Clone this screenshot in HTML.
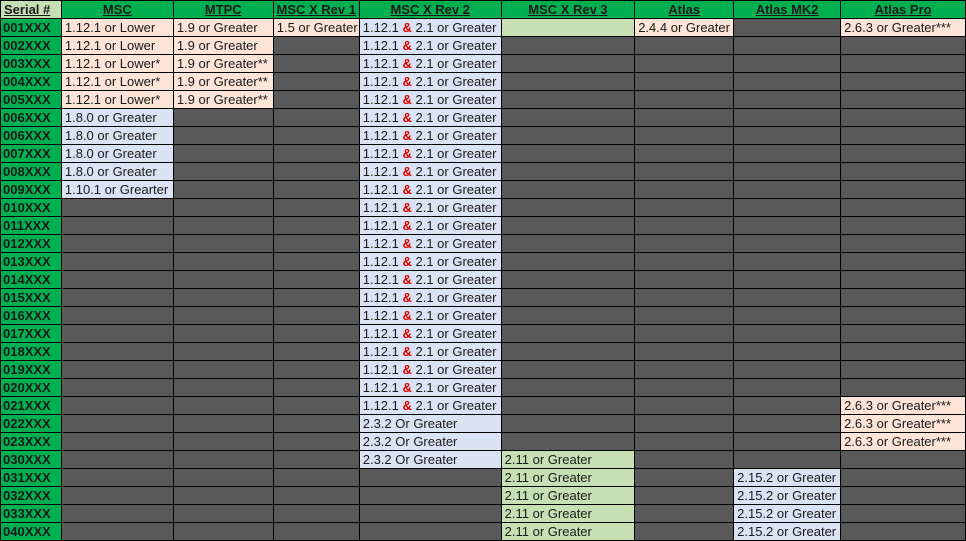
<!DOCTYPE html><html><head><style>
body{margin:0;width:966px;height:540px;overflow:hidden;background:#595959}
table{border-collapse:collapse;table-layout:fixed;font-family:"Liberation Sans",sans-serif;font-size:13px;color:#1a1a1a}
td{height:17px;padding:0 0 0 3px;border:1px solid #000;white-space:nowrap;overflow:hidden;line-height:17px;background:#595959}
th{height:17px;padding:0;border:1px solid #000;background:#00b050;font-weight:bold;font-size:13px;line-height:17px}
th u{text-decoration:underline}
th.s{background:#c6e0b4;text-align:left;padding-left:3px}
td.n{background:#00b050;font-weight:bold;padding-left:2px}
.p{background:#fce4d6}.b{background:#dae3f3}.g{background:#c6e0b4}
i{color:#e00000;font-style:normal;font-weight:bold}
</style></head><body>
<table>
<colgroup><col style="width:61px"><col style="width:112px"><col style="width:100px"><col style="width:86px"><col style="width:142px"><col style="width:134px"><col style="width:99px"><col style="width:107px"><col style="width:125px"></colgroup>
<tr><th class="s"><u>Serial #</u></th><th><u>MSC</u></th><th><u>MTPC</u></th><th><u>MSC X Rev 1</u></th><th><u>MSC X Rev 2</u></th><th><u>MSC X Rev 3</u></th><th><u>Atlas</u></th><th><u>Atlas MK2</u></th><th><u>Atlas Pro</u></th></tr>
<tr><td class="n">001XXX</td><td class="p">1.12.1 or Lower</td><td class="p">1.9 or Greater</td><td class="p">1.5 or Greater</td><td class="b">1.12.1 <i>&amp;</i> 2.1 or Greater</td><td class="g"></td><td class="p">2.4.4 or Greater</td><td></td><td class="p">2.6.3 or Greater***</td></tr>
<tr><td class="n">002XXX</td><td class="p">1.12.1 or Lower</td><td class="p">1.9 or Greater</td><td></td><td class="b">1.12.1 <i>&amp;</i> 2.1 or Greater</td><td></td><td></td><td></td><td></td></tr>
<tr><td class="n">003XXX</td><td class="p">1.12.1 or Lower*</td><td class="p">1.9 or Greater**</td><td></td><td class="b">1.12.1 <i>&amp;</i> 2.1 or Greater</td><td></td><td></td><td></td><td></td></tr>
<tr><td class="n">004XXX</td><td class="p">1.12.1 or Lower*</td><td class="p">1.9 or Greater**</td><td></td><td class="b">1.12.1 <i>&amp;</i> 2.1 or Greater</td><td></td><td></td><td></td><td></td></tr>
<tr><td class="n">005XXX</td><td class="p">1.12.1 or Lower*</td><td class="p">1.9 or Greater**</td><td></td><td class="b">1.12.1 <i>&amp;</i> 2.1 or Greater</td><td></td><td></td><td></td><td></td></tr>
<tr><td class="n">006XXX</td><td class="b">1.8.0 or Greater</td><td></td><td></td><td class="b">1.12.1 <i>&amp;</i> 2.1 or Greater</td><td></td><td></td><td></td><td></td></tr>
<tr><td class="n">006XXX</td><td class="b">1.8.0 or Greater</td><td></td><td></td><td class="b">1.12.1 <i>&amp;</i> 2.1 or Greater</td><td></td><td></td><td></td><td></td></tr>
<tr><td class="n">007XXX</td><td class="b">1.8.0 or Greater</td><td></td><td></td><td class="b">1.12.1 <i>&amp;</i> 2.1 or Greater</td><td></td><td></td><td></td><td></td></tr>
<tr><td class="n">008XXX</td><td class="b">1.8.0 or Greater</td><td></td><td></td><td class="b">1.12.1 <i>&amp;</i> 2.1 or Greater</td><td></td><td></td><td></td><td></td></tr>
<tr><td class="n">009XXX</td><td class="b">1.10.1 or Grearter</td><td></td><td></td><td class="b">1.12.1 <i>&amp;</i> 2.1 or Greater</td><td></td><td></td><td></td><td></td></tr>
<tr><td class="n">010XXX</td><td></td><td></td><td></td><td class="b">1.12.1 <i>&amp;</i> 2.1 or Greater</td><td></td><td></td><td></td><td></td></tr>
<tr><td class="n">011XXX</td><td></td><td></td><td></td><td class="b">1.12.1 <i>&amp;</i> 2.1 or Greater</td><td></td><td></td><td></td><td></td></tr>
<tr><td class="n">012XXX</td><td></td><td></td><td></td><td class="b">1.12.1 <i>&amp;</i> 2.1 or Greater</td><td></td><td></td><td></td><td></td></tr>
<tr><td class="n">013XXX</td><td></td><td></td><td></td><td class="b">1.12.1 <i>&amp;</i> 2.1 or Greater</td><td></td><td></td><td></td><td></td></tr>
<tr><td class="n">014XXX</td><td></td><td></td><td></td><td class="b">1.12.1 <i>&amp;</i> 2.1 or Greater</td><td></td><td></td><td></td><td></td></tr>
<tr><td class="n">015XXX</td><td></td><td></td><td></td><td class="b">1.12.1 <i>&amp;</i> 2.1 or Greater</td><td></td><td></td><td></td><td></td></tr>
<tr><td class="n">016XXX</td><td></td><td></td><td></td><td class="b">1.12.1 <i>&amp;</i> 2.1 or Greater</td><td></td><td></td><td></td><td></td></tr>
<tr><td class="n">017XXX</td><td></td><td></td><td></td><td class="b">1.12.1 <i>&amp;</i> 2.1 or Greater</td><td></td><td></td><td></td><td></td></tr>
<tr><td class="n">018XXX</td><td></td><td></td><td></td><td class="b">1.12.1 <i>&amp;</i> 2.1 or Greater</td><td></td><td></td><td></td><td></td></tr>
<tr><td class="n">019XXX</td><td></td><td></td><td></td><td class="b">1.12.1 <i>&amp;</i> 2.1 or Greater</td><td></td><td></td><td></td><td></td></tr>
<tr><td class="n">020XXX</td><td></td><td></td><td></td><td class="b">1.12.1 <i>&amp;</i> 2.1 or Greater</td><td></td><td></td><td></td><td></td></tr>
<tr><td class="n">021XXX</td><td></td><td></td><td></td><td class="b">1.12.1 <i>&amp;</i> 2.1 or Greater</td><td></td><td></td><td></td><td class="p">2.6.3 or Greater***</td></tr>
<tr><td class="n">022XXX</td><td></td><td></td><td></td><td class="b">2.3.2 Or Greater</td><td></td><td></td><td></td><td class="p">2.6.3 or Greater***</td></tr>
<tr><td class="n">023XXX</td><td></td><td></td><td></td><td class="b">2.3.2 Or Greater</td><td></td><td></td><td></td><td class="p">2.6.3 or Greater***</td></tr>
<tr><td class="n">030XXX</td><td></td><td></td><td></td><td class="b">2.3.2 Or Greater</td><td class="g">2.11 or Greater</td><td></td><td></td><td></td></tr>
<tr><td class="n">031XXX</td><td></td><td></td><td></td><td></td><td class="g">2.11 or Greater</td><td></td><td class="b">2.15.2 or Greater</td><td></td></tr>
<tr><td class="n">032XXX</td><td></td><td></td><td></td><td></td><td class="g">2.11 or Greater</td><td></td><td class="b">2.15.2 or Greater</td><td></td></tr>
<tr><td class="n">033XXX</td><td></td><td></td><td></td><td></td><td class="g">2.11 or Greater</td><td></td><td class="b">2.15.2 or Greater</td><td></td></tr>
<tr><td class="n">040XXX</td><td></td><td></td><td></td><td></td><td class="g">2.11 or Greater</td><td></td><td class="b">2.15.2 or Greater</td><td></td></tr>
</table>
</body></html>
